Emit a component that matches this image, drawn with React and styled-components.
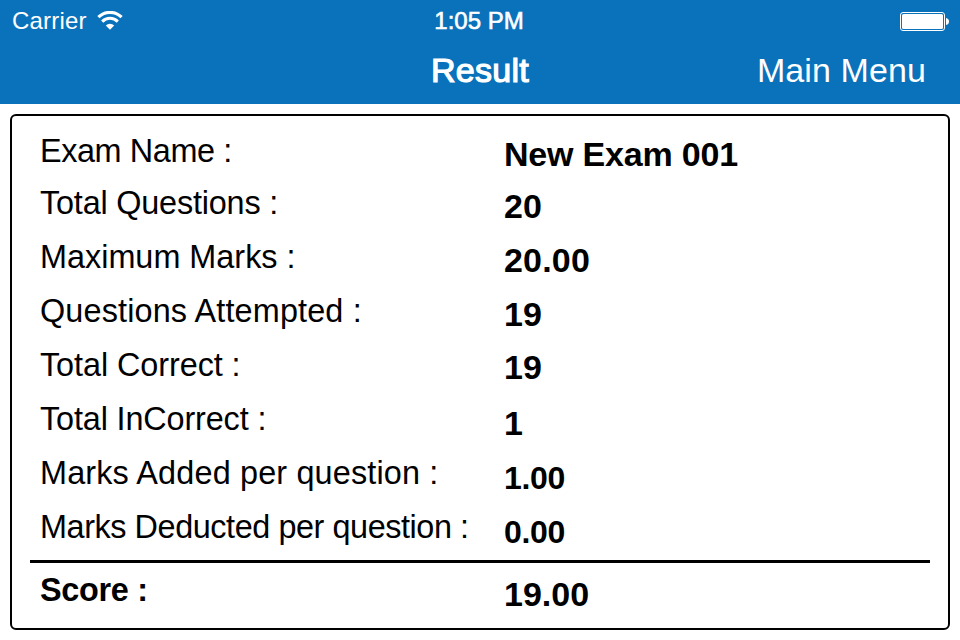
import styled, { createGlobalStyle } from "styled-components";

const GlobalStyle = createGlobalStyle`
  * {
    box-sizing: border-box;
  }
  body {
    margin: 0;
    background-color: white;
    font-family: "Liberation Sans", Arial, sans-serif;
  }
`
const Screen = styled.div`
  width: 960px;
  height: 640px;
  display: flex;
  flex-direction: column;
  overflow: hidden;
`
const Header = styled.header`
  height: 104px;
  background-color: #0a72bb;
  color: white;
`
const StatusBar = styled.div`
  height: 40px;
  padding: 0 11px 0 12px;
  display: grid;
  grid-template-columns: 1fr auto 1fr;
  align-items: center;
  font-size: 24px;
  line-height: 42px;
`
const Network = styled.div`
  display: flex;
  align-items: center;
  gap: 10px;
  letter-spacing: 0.2px;
`
const Time = styled.div`
  padding-right: 3px;
  -webkit-text-stroke: 0.6px white;
`
const BatteryWrapper = styled.div`
  display: flex;
  justify-content: flex-end;
`
const NavBar = styled.nav`
  height: 64px;
  padding: 0 34px;
  display: grid;
  grid-template-columns: 1fr auto 1fr;
  font-size: 34px;
  line-height: 61px;
`
const Title = styled.h1`
  grid-column: 2;
  margin: 0;
  font-size: 34px;
  font-weight: normal;
  letter-spacing: 0.3px;
  -webkit-text-stroke: 1.2px white;
`
const MenuLink = styled.div`
  text-align: right;
  letter-spacing: 0.1px;
  cursor: pointer;
`
const Card = styled.main`
  height: 516px;
  margin: 10px 10px 0;
  padding: 17px 18px 0;
  border: 2px solid black;
  border-radius: 6px;
  color: black;
`
const Row = styled.div`
  height: ${props => props.$height}px;
  padding-left: 10px;
  display: grid;
  grid-template-columns: 464px 1fr;
  align-items: start;
  line-height: 36px;
  white-space: nowrap;
`
const Label = styled.div`
  font-size: 32.4px;
  letter-spacing: ${props => props.$spacing || 0}px;
  font-weight: ${props => props.$bold ? "bold" : "normal"};
`
const Value = styled.div`
  padding-top: ${props => props.$drop}px;
  font-size: ${props => props.$small ? 32 : 34}px;
  letter-spacing: ${props => props.$spacing || 0}px;
  font-weight: bold;
`
const Divider = styled.hr`
  height: 3px;
  margin: 0 0 9px;
  border: none;
  background-color: black;
`

const results = [
  { label: "Exam Name :", value: "New Exam 001", height: 52, drop: 3, spacing: -0.4, valueSpacing: -0.2 },
  { label: "Total Questions :", value: "20", height: 54, drop: 3, spacing: -0.19 },
  { label: "Maximum Marks :", value: "20.00", height: 54, drop: 3, valueSpacing: 0.2 },
  { label: "Questions Attempted :", value: "19", height: 54, drop: 3, spacing: 0.15 },
  { label: "Total Correct :", value: "19", height: 54, drop: 2, spacing: -0.07 },
  { label: "Total InCorrect :", value: "1", height: 54, drop: 4, spacing: -0.14 },
  { label: "Marks Added per question :", value: "1.00", height: 54, drop: 5, spacing: 0.16, valueSpacing: -0.3, small: true },
  { label: "Marks Deducted per question :", value: "0.00", height: 51, drop: 5, spacing: -0.43, valueSpacing: -0.3, small: true },
]

const WifiIcon = () => (
  <svg width="26" height="20" viewBox="0 0 26 20" fill="none">
    <path d="M1.4 6.2 A16.4 16.4 0 0 1 24.6 6.2" stroke="white" strokeWidth="3.1" />
    <path d="M5.2 10.6 A11 11 0 0 1 20.8 10.6" stroke="white" strokeWidth="3" />
    <path d="M8.8 14.4 A6 6 0 0 1 17.2 14.4 L13 18.8 Z" fill="white" />
  </svg>
)

const BatteryIcon = () => (
  <svg width="49" height="19" viewBox="0 0 49 19">
    <rect x="0.5" y="0.5" width="44" height="18" rx="2.5" fill="none" stroke="white" />
    <rect x="2" y="2" width="41" height="15" rx="1.5" fill="white" />
    <path d="M46 6 Q49 6.5 49 9.5 Q49 12.5 46 13 Z" fill="white" />
  </svg>
)

export default function App() {
  return (
    <Screen>
      <GlobalStyle />
      <Header>
        <StatusBar>
          <Network>
            <span>Carrier</span>
            <WifiIcon />
          </Network>
          <Time>1:05 PM</Time>
          <BatteryWrapper>
            <BatteryIcon />
          </BatteryWrapper>
        </StatusBar>
        <NavBar>
          <Title>Result</Title>
          <MenuLink>Main Menu</MenuLink>
        </NavBar>
      </Header>
      <Card>
        {results.map(item => (
          <Row key={item.label} $height={item.height}>
            <Label $spacing={item.spacing}>{item.label}</Label>
            <Value $drop={item.drop} $small={item.small} $spacing={item.valueSpacing}>{item.value}</Value>
          </Row>
        ))}
        <Divider />
        <Row $height={54}>
          <Label $bold $spacing={-0.3}>Score :</Label>
          <Value $drop={4}>19.00</Value>
        </Row>
      </Card>
    </Screen>
  )
}
